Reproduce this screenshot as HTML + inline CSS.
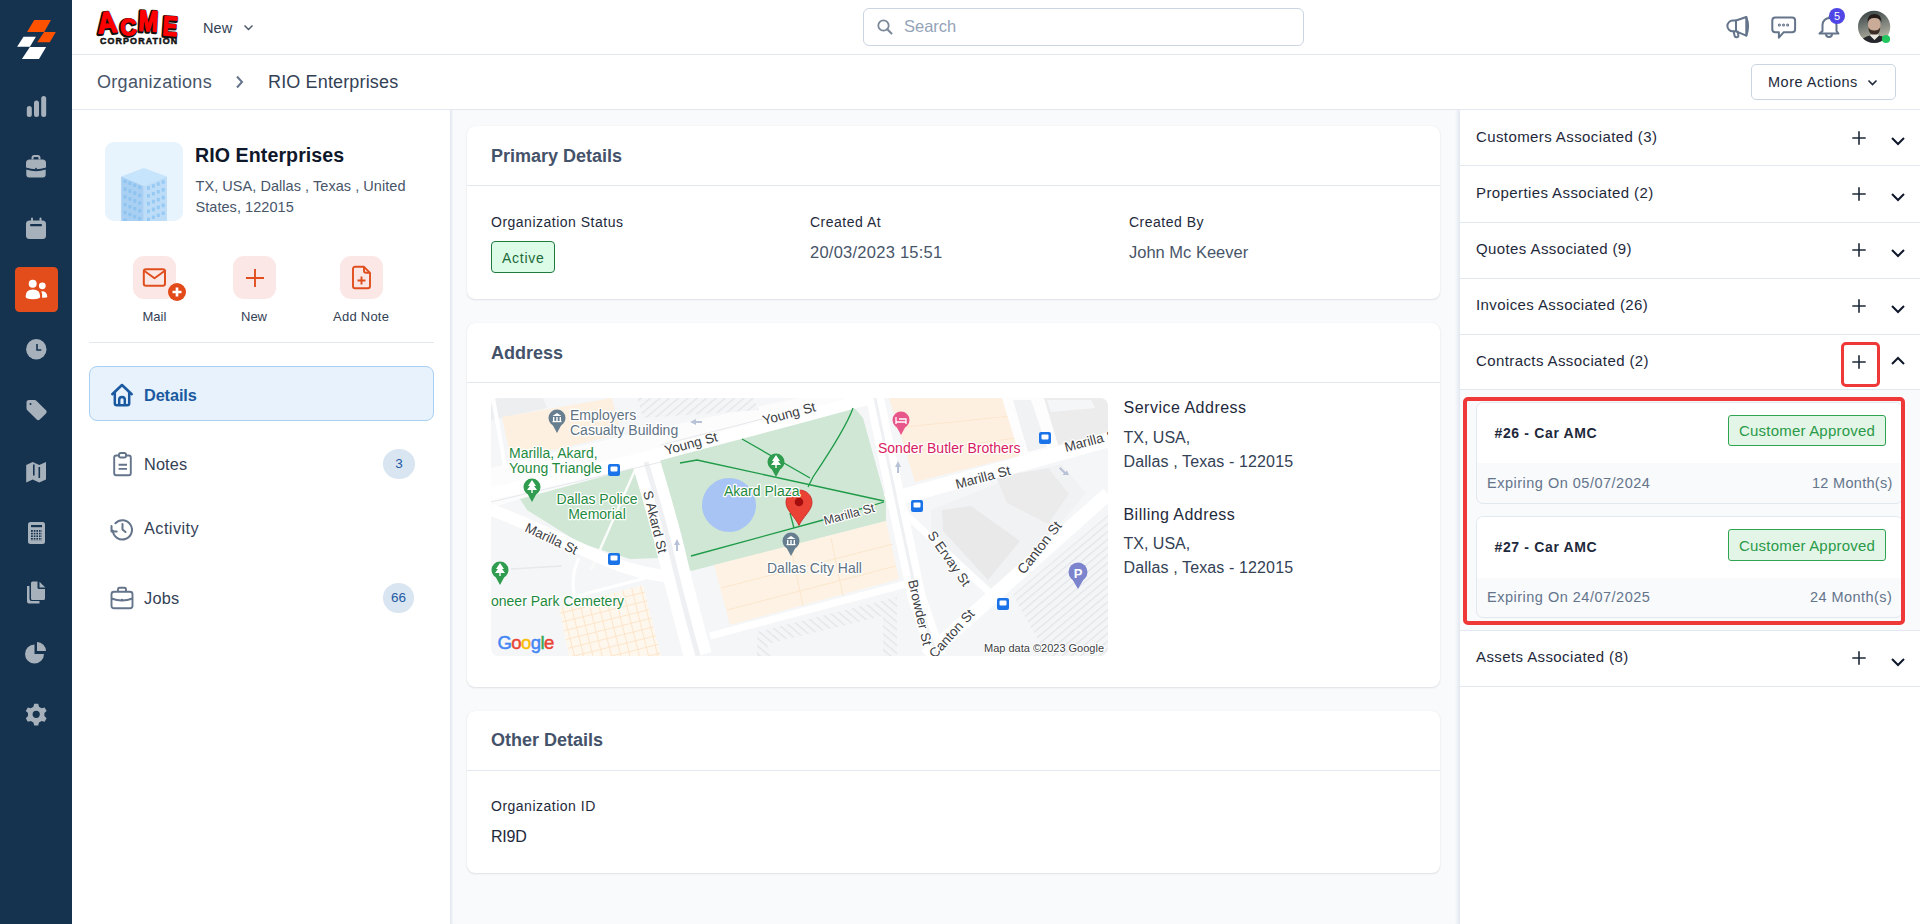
<!DOCTYPE html>
<html><head><meta charset="utf-8">
<style>
*{box-sizing:border-box;margin:0;padding:0}
html,body{width:1920px;height:924px;overflow:hidden;background:#fff;font-family:"Liberation Sans",sans-serif;color:#1e293b}
.abs{position:absolute}
.t{position:absolute;white-space:nowrap;line-height:1}
svg{position:absolute;overflow:visible}
#side{left:0;top:0;width:72px;height:924px;background:#15334f}
#top{left:72px;top:0;width:1848px;height:55px;background:#fff;border-bottom:1px solid #e2e8f0}
#crumb{left:72px;top:55px;width:1848px;height:55px;background:#fff;border-bottom:1px solid #e2e8f0}
#lp{left:72px;top:110px;width:379px;height:814px;background:#fff;border-right:1px solid #e2e8f0}
#mid{left:451px;top:110px;width:1009px;height:814px;background:#f8fafc;box-shadow:inset 2px 0 2px -1px rgba(148,163,184,.18)}
#rp{left:1460px;top:110px;width:460px;height:814px;background:#fff}
#rpb{left:1455px;top:110px;width:5px;height:814px;background:linear-gradient(to right,rgba(226,232,240,0),#edf1f6 50%,#e2e8f0)}
.card{position:absolute;background:#fff;border-radius:8px;box-shadow:0 1px 2px rgba(15,23,42,.10),0 0 1px rgba(15,23,42,.10)}
.hline{position:absolute;height:1px;background:#e2e8f0}
.lbl{font-size:14px;letter-spacing:.5px;color:#1e293b}
.val{font-size:16.5px;color:#475569;letter-spacing:.1px}
.h2{font-size:18px;font-weight:700;color:#44526a}
.row{position:absolute;left:1460px;width:460px;height:56px}
.row .rt{position:absolute;left:16px;top:19px;font-size:15px;letter-spacing:.4px;color:#1e293b;white-space:nowrap;line-height:1}
.mi{position:absolute;left:0;width:72px}
</style></head><body>
<div id="side" class="abs">
  <!-- logo -->
  <svg width="72" height="72" style="left:0;top:0">
    <polygon points="34.2,20.1 50.9,20.1 44.2,31.9 27.1,31.9" fill="#ff5200"/>
    <polygon points="44.2,32.1 55.8,32.1 49.8,42.2 37.2,42.2" fill="#ff5200"/>
    <polygon points="23.5,36.8 35.9,36.8 29.9,46.8 17.1,46.8" fill="#fff"/>
    <polygon points="29.9,46.9 46.1,46.9 39,59.1 21.9,59.1" fill="#fff"/>
  </svg>
  <!-- chart -->
  <svg width="72" height="30" style="left:0;top:92" fill="none" stroke="#a7b1bb" stroke-width="5" stroke-linecap="round">
    <line x1="29.3" y1="16.5" x2="29.3" y2="22.5"/><line x1="36.5" y1="11" x2="36.5" y2="22.5"/><line x1="43.7" y1="6.5" x2="43.7" y2="22.5"/>
  </svg>
  <!-- briefcase -->
  <svg width="72" height="30" style="left:0;top:152" fill="#a7b1bb">
    <path d="M31.5,7.5 v-1.5 a3,3 0 0 1 3,-3 h3 a3,3 0 0 1 3,3 v1.5 h-2 v-1.5 a1,1 0 0 0 -1,-1 h-3 a1,1 0 0 0 -1,1 v1.5z"/>
    <path d="M26,11 a3.5,3.5 0 0 1 3.5,-3.5 h13 a3.5,3.5 0 0 1 3.5,3.5 v4.5 q-10,3.5 -20,0z"/>
    <path d="M26.3,17.5 q9.7,3.3 19.4,0 v5 a3,3 0 0 1 -3,3 h-13.4 a3,3 0 0 1 -3,-3z"/>
    <circle cx="36" cy="16.6" r="0.9" fill="#15334f"/>
  </svg>
  <!-- calendar -->
  <svg width="72" height="30" style="left:0;top:213" fill="#a7b1bb">
    <rect x="31" y="4.5" width="2" height="4" rx="1"/><rect x="39.5" y="4.5" width="2" height="4" rx="1"/>
    <path d="M26,11 a3.5,3.5 0 0 1 3.5,-3.5 h13 a3.5,3.5 0 0 1 3.5,3.5 v11.5 a3.5,3.5 0 0 1 -3.5,3.5 h-13 a3.5,3.5 0 0 1 -3.5,-3.5z"/>
    <rect x="30" y="11" width="12" height="2.2" rx="1" fill="#15334f"/>
  </svg>
  <!-- active users -->
  <div class="abs" style="left:15px;top:267px;width:43px;height:45px;background:#e24d1b;border-radius:4.5px"></div>
  <svg width="72" height="30" style="left:0;top:274" fill="#fff">
    <circle cx="32.7" cy="9.7" r="4"/><circle cx="42.3" cy="11.8" r="3.4"/>
    <path d="M25.6,22.5 q0,-7 7.3,-7 q7.3,0 7.3,7 q0,2.8 -7.3,2.8 q-7.3,0 -7.3,-2.8z"/><path d="M41.3,17.3 q5.8,-0.3 6,5.7 q0,0.7 -5.2,0.8 q0.6,-3.6 -0.8,-6.5z"/>
  </svg>
  <!-- clock -->
  <svg width="72" height="30" style="left:0;top:334">
    <circle cx="36.3" cy="15.2" r="10.2" fill="#a7b1bb"/>
    <path d="M37,10 v6 h4.3" fill="none" stroke="#15334f" stroke-width="1.6"/>
  </svg>
  <!-- tag -->
  <svg width="72" height="30" style="left:0;top:395" fill="#a7b1bb">
    <path d="M26.5,7.5 a2.5,2.5 0 0 1 2.5,-2.5 h5.5 a3,3 0 0 1 2.1,0.9 l9.4,9.4 a2.2,2.2 0 0 1 0,3.1 l-6.2,6.2 a2.2,2.2 0 0 1 -3.1,0 l-9.4,-9.4 a3,3 0 0 1 -0.8,-2.1z"/>
    <circle cx="30.5" cy="9" r="1" fill="#15334f"/>
  </svg>
  <!-- map -->
  <svg width="72" height="30" style="left:0;top:456" fill="#a7b1bb">
    <path d="M26.2,9 l6.5,-3 l6.5,3 l6.8,-3 v17.5 l-6.8,3 l-6.5,-3 l-6.5,3z"/>
    <rect x="33" y="8.5" width="1.6" height="11" fill="#15334f"/><rect x="38.5" y="11" width="1.6" height="11" fill="#15334f"/>
  </svg>
  <!-- calculator -->
  <svg width="72" height="30" style="left:0;top:517" fill="#a7b1bb">
    <rect x="28" y="5" width="17" height="22" rx="2.5"/>
    <rect x="31" y="8" width="11" height="2.2" fill="#15334f"/>
    <g fill="#15334f"><rect x="31" y="13" width="11" height="10.5"/></g>
    <g fill="#a7b1bb"><rect x="32.8" y="13" width="1" height="10.5"/><rect x="35.4" y="13" width="1" height="10.5"/><rect x="38" y="13" width="1" height="10.5"/><rect x="40.6" y="13" width="1" height="10.5"/>
    <rect x="31" y="14.8" width="11" height="1"/><rect x="31" y="17.4" width="11" height="1"/><rect x="31" y="20" width="11" height="1"/><rect x="31" y="22.6" width="11" height="1"/></g>
  </svg>
  <!-- files -->
  <svg width="72" height="30" style="left:0;top:577" fill="#a7b1bb">
    <path d="M27,9 h2.5 v13 a2,2 0 0 0 2,2 h8 v2.5 h-10.5 a2,2 0 0 1 -2,-2z"/>
    <path d="M31,6 a1.5,1.5 0 0 1 1.5,-1.5 h5 v6 a1.5,1.5 0 0 0 1.5,1.5 h6 v9.5 a1.5,1.5 0 0 1 -1.5,1.5 h-11 a1.5,1.5 0 0 1 -1.5,-1.5z"/>
    <path d="M39.5,4.8 l5.8,5.8 h-5.8z"/>
  </svg>
  <!-- pie -->
  <svg width="72" height="30" style="left:0;top:638" fill="#a7b1bb">
    <path d="M34.5,6.5 a9.5,9.5 0 1 0 9.5,9.5 h-9.5z"/>
    <path d="M37,4 a9,9 0 0 1 9,9 h-9z"/>
  </svg>
  <!-- gear -->
  <svg width="72" height="30" style="left:0;top:699" viewBox="0 0 72 30">
    <g transform="translate(36.2,15.3)">
      <path fill="#a7b1bb" d="M-2,-10.5 h4 l0.8,3 l2.6,1.5 l3,-0.9 l2,3.5 l-2.2,2.2 v3 l2.2,2.2 l-2,3.5 l-3,-0.9 l-2.6,1.5 l-0.8,3 h-4 l-0.8,-3 l-2.6,-1.5 l-3,0.9 l-2,-3.5 l2.2,-2.2 v-3 l-2.2,-2.2 l2,-3.5 l3,0.9 l2.6,-1.5z"/>
      <circle r="3.6" fill="#15334f"/>
    </g>
  </svg>
</div>

<div id="top" class="abs"></div>
<div id="crumb" class="abs"></div>
<div id="lp" class="abs"></div>
<div id="mid" class="abs"></div>
<div id="rp" class="abs"></div><div id="rpb" class="abs"></div>

<!-- TOPBAR CONTENT -->
<!-- ACME logo -->
<svg width="90" height="44" style="left:95px;top:5px" font-family="Liberation Sans" font-weight="700">
  <g id="acme">
    <text transform="translate(3,28.5) rotate(-5) scale(1.12,1.22)" font-size="24.5">A</text>
    <text transform="translate(25.5,30.5) rotate(-3) scale(1.08,1.1)" font-size="21">C</text>
    <text transform="translate(43,25.5) rotate(3) scale(1.02,1.27)" font-size="23">M</text>
    <text transform="translate(67,30) rotate(4) scale(1.0,1.22)" font-size="22.5">E</text>
  </g>
  <use href="#acme" fill="#111" stroke="#111" stroke-width="3.2" stroke-linejoin="round" transform="translate(-0.6,0.8)"/>
  <use href="#acme" fill="#f00" stroke="#f00" stroke-width="1.1" stroke-linejoin="round"/>
  <text x="5" y="39.2" font-size="8.9" fill="#111" stroke="#111" stroke-width=".5" letter-spacing="1.12">CORPORATION</text>
</svg>
<div class="t" style="left:203px;top:21px;font-size:14.5px;letter-spacing:.1px;color:#334155">New</div>
<svg width="12" height="8" style="left:243px;top:24px"><path d="M1.5,1.5 l4,4 l4,-4" fill="none" stroke="#475569" stroke-width="1.4"/></svg>

<!-- search -->
<div class="abs" style="left:863px;top:8px;width:441px;height:38px;border:1px solid #cbd5e1;border-radius:6px;background:#fff"></div>
<svg width="20" height="20" style="left:875px;top:17px"><circle cx="8.5" cy="8.5" r="5.2" fill="none" stroke="#7b8898" stroke-width="1.8"/><path d="M12.3,12.3 l4.2,4.2" stroke="#7b8898" stroke-width="2" stroke-linecap="round"/></svg>
<div class="t" style="left:904px;top:18px;font-size:16.5px;color:#94a3b8">Search</div>

<!-- right icons -->
<svg width="30" height="30" style="left:1724px;top:12px" fill="none" stroke="#64748b" stroke-width="2" stroke-linejoin="round" stroke-linecap="round">
  <path d="M12,8.5 L22.3,5 L22.3,23.6 L12,19.3 Z"/>
  <path d="M12,8.5 H8.8 a5.4,5.4 0 0 0 0,10.8 H12"/>
  <path d="M22.3,5 q3.6,9.3 0,18.6"/>
  <path d="M9.6,19.6 l1,4.2 a1.9,1.9 0 0 0 3.7,-0.9 l-0.7,-3.3"/>
</svg>
<svg width="30" height="30" style="left:1768px;top:12px" fill="none" stroke="#64748b" stroke-width="2" stroke-linejoin="round">
  <path d="M7.3,5.6 h16.8 a3,3 0 0 1 3,3 v8.7 a3,3 0 0 1 -3,3 h-8.6 l-4.6,5.4 v-5.4 h-3.6 a3,3 0 0 1 -3,-3 v-8.7 a3,3 0 0 1 3,-3z"/>
  <circle cx="11.4" cy="13" r="0.55" stroke-width="1.9"/><circle cx="15.5" cy="13" r="0.55" stroke-width="1.9"/><circle cx="19.6" cy="13" r="0.55" stroke-width="1.9"/>
</svg>
<svg width="30" height="30" style="left:1814px;top:12px" fill="none" stroke="#64748b" stroke-width="2" stroke-linejoin="round">
  <path d="M5.5,21.5 h19 l-2,-2.5 v-6 a7,7 0 0 0 -14,0 v6z"/>
  <path d="M12,22 a3,3 0 0 0 6,0"/>
  <path d="M15,6 v-1.5"/>
</svg>
<div class="abs" style="left:1829px;top:7.5px;width:16px;height:16px;border-radius:50%;background:#4f46e5;color:#fff;font-size:11px;line-height:16px;text-align:center">5</div>
<!-- avatar -->
<svg width="34" height="34" style="left:1857px;top:10px">
  <defs><linearGradient id="av" x1="0" y1="0" x2="0.3" y2="1"><stop offset="0" stop-color="#2f3a3c"/><stop offset=".55" stop-color="#7b807a"/><stop offset="1" stop-color="#b9b5a4"/></linearGradient>
  <clipPath id="avc"><circle cx="17.1" cy="16.9" r="16.1"/></clipPath></defs>
  <circle cx="17.1" cy="16.9" r="16.1" fill="url(#av)"/>
  <g clip-path="url(#avc)">
    <ellipse cx="17.3" cy="15" rx="6.3" ry="8.5" fill="#c9ab97"/>
    <path d="M10.5,13 q-0.5,-9 7,-9 q7.5,0 7,9 q-1,-5 -7,-5 q-6,0 -7,5z" fill="#231c19"/>
    <path d="M11.3,17 q0.5,8 6,8.5 q5.5,-0.5 6,-8.5 q-1.5,3.5 -6,3.5 q-4.5,0 -6,-3.5z" fill="#3b2d26"/>
    <path d="M2,36 q2,-9 11,-10.5 l4.5,4 l4.5,-4 q9,1.5 11,10.5z" fill="#25272c"/>
    <path d="M13,25.5 l4.5,4.5 l4.5,-4.5 l-1,-1 h-7z" fill="#e9e6e0"/>
  </g>
  <circle cx="29" cy="29" r="4.1" fill="#22c55e"/>
</svg>

<!-- BREADCRUMB -->
<div class="t" style="left:97px;top:73px;font-size:18px;letter-spacing:.3px;color:#475569">Organizations</div>
<svg width="12" height="14" style="left:234px;top:75px"><path d="M3,1.5 l5,5.5 l-5,5.5" fill="none" stroke="#64748b" stroke-width="2"/></svg>
<div class="t" style="left:268px;top:73px;font-size:18px;letter-spacing:.15px;color:#334155">RIO Enterprises</div>
<div class="abs" style="left:1751px;top:64px;width:145px;height:36px;border:1px solid #cbd5e1;border-radius:5px"></div>
<div class="t" style="left:1768px;top:75px;font-size:14.5px;letter-spacing:.5px;color:#1e293b">More Actions</div>
<svg width="12" height="8" style="left:1866.5px;top:78.5px"><path d="M1.5,1.5 l4,4 l4,-4" fill="none" stroke="#1e293b" stroke-width="1.6"/></svg>


<!-- LEFT PANEL -->
<div class="abs" style="left:105px;top:142px;width:78px;height:79px;border-radius:9px;background:#e7f3fd;overflow:hidden">
  <svg width="78" height="79" style="left:0;top:0">
<polygon points="16.2,34.6 38.8,26.1 61.9,34.6 38.8,44" fill="#c6e4fb"/>
<polygon points="16.2,34.6 38.8,44 38.8,79 16.2,79" fill="#a9d0f3"/>
<polygon points="38.8,44 61.9,34.6 61.9,79 38.8,79" fill="#bcdcf7"/>
<g fill="#8fc4f1">
<rect x="18.5" y="37.5" width="3" height="3.6" rx=".6"/>
<rect x="18.5" y="45.3" width="3" height="3.6" rx=".6"/>
<rect x="18.5" y="53.1" width="3" height="3.6" rx=".6"/>
<rect x="18.5" y="60.9" width="3" height="3.6" rx=".6"/>
<rect x="18.5" y="68.7" width="3" height="3.6" rx=".6"/>
<rect x="18.5" y="76.5" width="3" height="3.6" rx=".6"/>
<rect x="23.4" y="39.5" width="3" height="3.6" rx=".6"/>
<rect x="23.4" y="47.3" width="3" height="3.6" rx=".6"/>
<rect x="23.4" y="55.1" width="3" height="3.6" rx=".6"/>
<rect x="23.4" y="62.9" width="3" height="3.6" rx=".6"/>
<rect x="23.4" y="70.7" width="3" height="3.6" rx=".6"/>
<rect x="28.3" y="41.5" width="3" height="3.6" rx=".6"/>
<rect x="28.3" y="49.3" width="3" height="3.6" rx=".6"/>
<rect x="28.3" y="57.1" width="3" height="3.6" rx=".6"/>
<rect x="28.3" y="64.9" width="3" height="3.6" rx=".6"/>
<rect x="28.3" y="72.7" width="3" height="3.6" rx=".6"/>
<rect x="33.2" y="43.6" width="3" height="3.6" rx=".6"/>
<rect x="33.2" y="51.4" width="3" height="3.6" rx=".6"/>
<rect x="33.2" y="59.2" width="3" height="3.6" rx=".6"/>
<rect x="33.2" y="67.0" width="3" height="3.6" rx=".6"/>
<rect x="33.2" y="74.8" width="3" height="3.6" rx=".6"/>
<rect x="42.0" y="44.2" width="3" height="3.6" rx=".6" fill="#96c9f3"/>
<rect x="42.0" y="52.0" width="3" height="3.6" rx=".6" fill="#96c9f3"/>
<rect x="42.0" y="59.8" width="3" height="3.6" rx=".6" fill="#96c9f3"/>
<rect x="42.0" y="67.6" width="3" height="3.6" rx=".6" fill="#96c9f3"/>
<rect x="42.0" y="75.4" width="3" height="3.6" rx=".6" fill="#96c9f3"/>
<rect x="46.9" y="42.2" width="3" height="3.6" rx=".6" fill="#96c9f3"/>
<rect x="46.9" y="50.0" width="3" height="3.6" rx=".6" fill="#96c9f3"/>
<rect x="46.9" y="57.8" width="3" height="3.6" rx=".6" fill="#96c9f3"/>
<rect x="46.9" y="65.6" width="3" height="3.6" rx=".6" fill="#96c9f3"/>
<rect x="46.9" y="73.4" width="3" height="3.6" rx=".6" fill="#96c9f3"/>
<rect x="51.8" y="40.2" width="3" height="3.6" rx=".6" fill="#96c9f3"/>
<rect x="51.8" y="48.0" width="3" height="3.6" rx=".6" fill="#96c9f3"/>
<rect x="51.8" y="55.8" width="3" height="3.6" rx=".6" fill="#96c9f3"/>
<rect x="51.8" y="63.6" width="3" height="3.6" rx=".6" fill="#96c9f3"/>
<rect x="51.8" y="71.4" width="3" height="3.6" rx=".6" fill="#96c9f3"/>
<rect x="56.7" y="38.2" width="3" height="3.6" rx=".6" fill="#96c9f3"/>
<rect x="56.7" y="46.0" width="3" height="3.6" rx=".6" fill="#96c9f3"/>
<rect x="56.7" y="53.8" width="3" height="3.6" rx=".6" fill="#96c9f3"/>
<rect x="56.7" y="61.6" width="3" height="3.6" rx=".6" fill="#96c9f3"/>
<rect x="56.7" y="69.4" width="3" height="3.6" rx=".6" fill="#96c9f3"/>
</g></svg>
</div>
<div class="t" style="left:195px;top:146.3px;font-size:19.6px;font-weight:700;letter-spacing:.08px;color:#0f172a">RIO Enterprises</div>
<div class="t" style="left:195.5px;top:179px;font-size:14.5px;color:#475569;letter-spacing:.05px">TX, USA, Dallas , Texas , United</div>
<div class="t" style="left:195.5px;top:200px;font-size:14.5px;color:#475569;letter-spacing:.05px">States, 122015</div>

<div class="abs" style="left:133px;top:256px;width:43px;height:43px;border-radius:11px;background:#fbe8e6"></div>
<div class="abs" style="left:233px;top:256px;width:43px;height:43px;border-radius:11px;background:#fbe8e6"></div>
<div class="abs" style="left:340px;top:256px;width:43px;height:43px;border-radius:11px;background:#fbe8e6"></div>
<svg width="24" height="20" style="left:142px;top:267px" fill="none" stroke="#e04e1d" stroke-width="2" stroke-linejoin="round">
  <rect x="1.8" y="2.2" width="21.2" height="16.5" rx="2.2"/><path d="M2.5,4 l10,7.2 l10,-7.2"/>
</svg>
<svg width="20" height="20" style="left:167px;top:282px"><circle cx="10" cy="10" r="9" fill="#e24a19"/><path d="M10,5.5 v9 M5.5,10 h9" stroke="#fff" stroke-width="2.6"/></svg>
<svg width="20" height="20" style="left:244.5px;top:267.5px"><path d="M10,1 v18 M1,10 h18" stroke="#e04e1d" stroke-width="1.9"/></svg>
<svg width="22" height="26" style="left:351px;top:265px" fill="none" stroke="#e04e1d" stroke-width="1.9" stroke-linejoin="round">
  <path d="M4,1.8 h9 l6,6 v13.5 a2,2 0 0 1 -2,2 h-13 a2,2 0 0 1 -2,-2 v-17.5 a2,2 0 0 1 2,-2z"/><path d="M13,1.8 v4 a2,2 0 0 0 2,2 h4"/><path d="M10.5,11.5 v8 M6.5,15.5 h8"/>
</svg>
<div class="t" style="left:142.5px;top:310px;font-size:13px;color:#334155">Mail</div>
<div class="t" style="left:241px;top:310px;font-size:13px;color:#334155">New</div>
<div class="t" style="left:333px;top:310px;font-size:13px;letter-spacing:.25px;color:#334155">Add Note</div>

<div class="hline" style="left:89px;top:342px;width:345px"></div>

<div class="abs" style="left:89px;top:366px;width:345px;height:55px;border:1px solid #a8d0f3;border-radius:8px;background:#e7f2fc"></div>
<svg width="26" height="26" style="left:109px;top:382px" fill="none" stroke="#1b5aa0" stroke-width="2.2" stroke-linejoin="round">
  <path d="M3.3,12.2 l9.7,-9.2 l9.7,9.2" stroke-width="2.6" stroke-linecap="round"/><path d="M5.8,10 v11.3 a2,2 0 0 0 2,2 h10.4 a2,2 0 0 0 2,-2 v-11.3" stroke-width="2.5"/><path d="M10.2,23.3 v-5.5 a2.8,2.8 0 0 1 5.6,0 v5.5" stroke-width="2.5"/>
</svg>
<div class="t" style="left:144px;top:386.8px;font-size:16.3px;font-weight:700;letter-spacing:-.1px;color:#1b5aa0">Details</div>

<svg width="26" height="26" style="left:110px;top:451px" fill="none" stroke="#64748b" stroke-width="1.9" stroke-linejoin="round">
  <rect x="4.2" y="4.5" width="16.6" height="19.8" rx="2"/><rect x="9" y="2" width="7" height="4.5" rx="1.8" fill="#fff"/><path d="M8.6,13.8 h8.4 M8.6,17.9 h8.4"/>
</svg>
<div class="t" style="left:144px;top:456.3px;font-size:16.3px;color:#334155;letter-spacing:.15px">Notes</div>
<div class="abs" style="left:383px;top:449px;width:32px;height:29.5px;border-radius:50%;background:#d9e5f1;color:#1f5aa3;font-size:13.5px;line-height:30px;text-align:center">3</div>

<svg width="26" height="26" style="left:109px;top:516px" fill="none" stroke="#64748b" stroke-width="2" stroke-linecap="round" stroke-linejoin="round">
  <path d="M3.8,14.5 a9.6,9.6 0 1 0 2.6,-7.2"/><path d="M2.5,10 v5.5 h5.2" transform="rotate(0)"/><path d="M13.5,8 v5.5 l3,2.5"/>
</svg>
<div class="t" style="left:144px;top:520px;font-size:16.3px;color:#334155;letter-spacing:.45px">Activity</div>

<svg width="26" height="26" style="left:109px;top:585px" fill="none" stroke="#64748b" stroke-width="1.9" stroke-linejoin="round">
  <rect x="2.5" y="6.8" width="21" height="16.5" rx="2.5"/><path d="M9,6.8 v-2.5 a1.5,1.5 0 0 1 1.5,-1.5 h5 a1.5,1.5 0 0 1 1.5,1.5 v2.5"/><path d="M2.5,13.5 q10.5,4 21,0"/><circle cx="13" cy="15" r=".5" stroke-width="1.4"/>
</svg>
<div class="t" style="left:144px;top:590.3px;font-size:16.3px;color:#334155;letter-spacing:.25px">Jobs</div>
<div class="abs" style="left:383px;top:583px;width:31px;height:29.5px;border-radius:50%;background:#d9e5f1;color:#1f5aa3;font-size:13.5px;line-height:30px;text-align:center">66</div>


<!-- MIDDLE CARDS -->
<div class="card" style="left:467px;top:125.5px;width:973px;height:173.5px"></div>
<div class="hline" style="left:467px;top:185px;width:973px"></div>
<div class="t h2" style="left:491px;top:147px">Primary Details</div>
<div class="t lbl" style="left:491px;top:214.5px">Organization Status</div>
<div class="abs" style="left:491px;top:241px;width:64px;height:31.5px;border:1.3px solid #1f7a40;border-radius:4px;background:#dcfce7"></div>
<div class="t" style="left:502px;top:251px;font-size:14px;letter-spacing:.75px;color:#1b6a37">Active</div>
<div class="t lbl" style="left:810px;top:214.5px">Created At</div>
<div class="t val" style="left:810px;top:244px;letter-spacing:.25px">20/03/2023 15:51</div>
<div class="t lbl" style="left:1129px;top:214.5px">Created By</div>
<div class="t val" style="left:1129px;top:244px;letter-spacing:0">John Mc Keever</div>

<div class="card" style="left:467px;top:322.5px;width:973px;height:364px"></div>
<div class="hline" style="left:467px;top:382px;width:973px"></div>
<div class="t h2" style="left:491px;top:344px">Address</div>
<div id="map" class="abs" style="left:491px;top:398px;width:617px;height:258px;border-radius:8px;overflow:hidden;background:#f5f6f8"><svg width="617" height="258" style="left:0;top:0" font-family="Liberation Sans">
<defs>
  <pattern id="hatch" width="6" height="6" patternUnits="userSpaceOnUse" patternTransform="rotate(-40)">
    <rect width="6" height="6" fill="#f4f5f7"/><rect width="6" height="1.2" fill="#e2e4e8"/>
  </pattern>
  <pattern id="hatch2" width="6" height="6" patternUnits="userSpaceOnUse" patternTransform="rotate(40)">
    <rect width="6" height="6" fill="#f4f5f7"/><rect width="6" height="1.2" fill="#e2e4e8"/>
  </pattern>
  <pattern id="ogrid" width="9" height="9" patternUnits="userSpaceOnUse" patternTransform="rotate(-14)">
    <rect width="9" height="9" fill="#fef7ee"/><rect width="9" height="0.8" fill="#fde2c2"/><rect width="0.8" height="9" fill="#fde2c2"/>
  </pattern>
</defs>
<rect width="617" height="258" fill="#f5f6f8"/>
<!-- top-left grey bits -->
<polygon points="0,0 52,0 56,10 10,20 0,22" fill="#eceef0"/>
<!-- white band Young St area -->
<polygon points="0,70 135,37 317,-2 385,-2 362,8 168,63 144,70 29,101 0,110" fill="#fcfcfd"/>
<line x1="2" y1="0" x2="14" y2="68" stroke="#fff" stroke-width="4"/>
<!-- Employers Casualty orange -->
<polygon points="11,19 121,0 130,36 20,62" fill="#fdf0e1"/>
<!-- top hatched -->
<polygon points="146,0 262,0 268,12 152,20" fill="url(#hatch)"/>
<!-- Police memorial park -->
<polygon points="29,101 143,70 169,160 139,161 89,145 36,112" fill="#cfe7d4"/>
<path d="M144,72 L100,172" stroke="#fafcfa" stroke-width="2.5"/>
<!-- Akard Plaza park -->
<polygon points="168,63 307,21 362,8 372,20 395,103 395,123 307,146 196,174" fill="#cfe7d4"/>
<!-- pond -->
<circle cx="238" cy="107" r="27" fill="#a7c4f5"/>
<!-- city hall orange -->
<polygon points="223,167 395,123 408,181 239,227" fill="#fdf2e4"/>
<g stroke="#fbe3c6" stroke-width=".8" fill="none"><path d="M230,190 L402,146 M236,212 L405,168 M300,150 L312,208 M340,140 L352,198"/></g>
<!-- bottom-left cemetery orange -->
<polygon points="68,210 152,187 170,258 78,258" fill="url(#ogrid)"/>
<!-- sonder orange -->
<polygon points="398,0 511,0 531,57 424,84" fill="#fdf0e1"/>
<g stroke="#fbe3c6" stroke-width=".8" fill="none"><path d="M404,30 L520,18 M410,55 L526,40"/></g>
<!-- grey buildings -->
<polygon points="440,112 505,86 570,66 595,95 540,160 500,190 440,135" fill="#f1f2f3"/>
<polygon points="451,112 480,108 529,143 497,182 452,133" fill="#e9e9ea"/>
<polygon points="505,79 557,70 578,96 557,126 516,105" fill="#ebebec"/>
<polygon points="511,0 553,0 568,47 529,59" fill="#fdfdfe"/><polygon points="522,2 540,2 556,49 537,54" fill="#f1f2f4"/><polygon points="553,0 617,0 617,35 567,47" fill="#ececed"/><polygon points="556,2 600,2 604,10 560,14" fill="#f5f6f7"/>
<!-- bottom hatch lots -->
<polygon points="522,197 617,117 617,258 556,258" fill="url(#hatch)"/>
<polygon points="266,234 406,199 406,258 266,258" fill="url(#hatch2)"/>
<polygon points="276,246 392,218 392,258 280,258" fill="#f5f6f8"/>
<!-- roads -->
<g stroke="#ffffff" fill="none" stroke-linecap="butt">
  <path d="M0,96 L170,56 L310,19 L380,0" stroke-width="12"/>
  <path d="M0,112 C40,126 84,150 130,168 C160,178 185,180 200,178" stroke-width="12"/>
  <path d="M395,103 L617,42" stroke-width="15"/>
  <path d="M155,64 Q175,130 183,166 Q195,215 207,258" stroke-width="28"/>
  <path d="M384,0 L410,125 L426,200 L446,258" stroke-width="18"/>
  <path d="M435,258 L617,96" stroke-width="14"/>
  <path d="M406,108 L502,198" stroke-width="7"/>
  
  <path d="M219,238 L415,186" stroke-width="7"/>
  <path d="M20,171 L71,168" stroke-width="1.5" stroke="#e6e8eb"/>
  <path d="M88,160 Q78,180 85,205" stroke-width="3"/>
  <path d="M86,198 L170,176" stroke-width="3"/>
</g>
<!-- lane medians -->
<g fill="none">
  <path d="M155,64 Q175,130 183,166 Q195,215 207,258" stroke="#eef0f3" stroke-width="5"/>
  <path d="M384,0 L410,125 L426,200 L446,258" stroke="#eef0f3" stroke-width="3"/>
</g>
<g stroke="#dfe2e6" stroke-width=".8" fill="none">
  <path d="M0,104 L170,64"/>
  <path d="M170,47 L310,11"/>
</g>
<!-- park paths -->
<g stroke="#1e9a48" stroke-width="1.3" fill="none">
  <path d="M189,65 L206,62 L393,103"/>
  <path d="M200,158 L332,122 L393,104"/>
  <path d="M362,10 Q355,30 322,79 L317,89"/>
  <path d="M251,41 L319,80"/>
  <path d="M299,115 L303,130"/>
</g>
<!-- one-way arrows -->
<g fill="#b8c2d6">
  <path d="M199,24 l6,-3 v2 h6 v2 h-6 v2z"/>
  <path d="M186,141 l-3,6 h2 v6 h2 v-6 h2z"/>
  <path d="M407,63 l-3,6 h2 v6 h2 v-6 h2z"/><path d="M578,77 l-6.5,0 l1.5,-1.5 l-5,-5 l1.5,-1.5 l5,5 l1.5,-1.5z"/>
</g>
<!-- pins -->
<g>
  <circle cx="66" cy="20" r="8.5" fill="#667e8f"/><path d="M60,24 l6,11 l6,-11z" fill="#667e8f"/>
  <path d="M61.5,18 l4.5,-3 l4.5,3z" fill="#fff"/><rect x="62" y="19" width="1.4" height="4" fill="#fff"/><rect x="65.3" y="19" width="1.4" height="4" fill="#fff"/><rect x="68.6" y="19" width="1.4" height="4" fill="#fff"/><rect x="61.5" y="23" width="9" height="1.2" fill="#fff"/>

  <circle cx="300" cy="143" r="8.5" fill="#667e8f"/><path d="M294,147 l6,11 l6,-11z" fill="#667e8f"/>
  <path d="M295.5,141 l4.5,-3 l4.5,3z" fill="#fff"/><rect x="296" y="142" width="1.4" height="4" fill="#fff"/><rect x="299.3" y="142" width="1.4" height="4" fill="#fff"/><rect x="302.6" y="142" width="1.4" height="4" fill="#fff"/><rect x="295.5" y="146" width="9" height="1.2" fill="#fff"/>

  <circle cx="285" cy="64" r="8.5" fill="#2f9c4f"/><path d="M279,68 l6,11 l6,-11z" fill="#2f9c4f"/><path d="M285,57 l-4,6 h2 l-3,4 h10 l-3,-4 h2z M284.3,67 h1.4 v3 h-1.4z" fill="#fff"/>
  <circle cx="41" cy="89" r="8.5" fill="#2f9c4f"/><path d="M35,93 l6,11 l6,-11z" fill="#2f9c4f"/><path d="M41,82 l-4,6 h2 l-3,4 h10 l-3,-4 h2z M40.3,92 h1.4 v3 h-1.4z" fill="#fff"/>
  <circle cx="9" cy="172" r="8.5" fill="#2f9c4f"/><path d="M3,176 l6,11 l6,-11z" fill="#2f9c4f"/><path d="M9,165 l-4,6 h2 l-3,4 h10 l-3,-4 h2z M8.3,175 h1.4 v3 h-1.4z" fill="#fff"/>

  <circle cx="410" cy="22" r="8.5" fill="#e8578a"/><path d="M404,26 l6,11 l6,-11z" fill="#e8578a"/><path d="M405,19 v7 M405,24 h10 v2 M408,21 h7 v3" stroke="#fff" stroke-width="1.3" fill="none"/>

  <circle cx="587" cy="174" r="9.5" fill="#7b84cc"/><path d="M580,179 l7,12 l7,-12z" fill="#7b84cc"/>
  <text x="587" y="179.5" font-size="13" font-weight="700" fill="#fff" text-anchor="middle">P</text>
</g>
<!-- bus stops -->
<g fill="#1a73e8">
  <rect x="117" y="66" width="12" height="12" rx="2"/><rect x="117" y="155" width="12" height="12" rx="2"/>
  <rect x="420" y="102" width="12" height="12" rx="2"/><rect x="548" y="34" width="12" height="12" rx="2"/>
  <rect x="506" y="200" width="12" height="12" rx="2"/>
</g>
<g fill="#fff">
  <rect x="119.5" y="68.5" width="7" height="5" rx="1"/><rect x="119.5" y="157.5" width="7" height="5" rx="1"/><rect x="422.5" y="104.5" width="7" height="5" rx="1"/><rect x="550.5" y="36.5" width="7" height="5" rx="1"/><rect x="508.5" y="202.5" width="7" height="5" rx="1"/>
</g>
<!-- red pin -->
<path d="M308,92 c-7.5,0 -13,5.5 -13,12.5 c0,8 9,14 13,23 c4,-9 13,-15 13,-23 c0,-7 -5.5,-12.5 -13,-12.5z" fill="#ea4335" stroke="#c5221f" stroke-width=".8"/>
<circle cx="308" cy="104" r="4.3" fill="#a50e0e"/>

<!-- labels -->
<g font-size="14" fill="#5f7383" stroke="#fff" stroke-width="2.5" paint-order="stroke" stroke-linejoin="round">
  <text x="79" y="22">Employers</text>
  <text x="79" y="37">Casualty Building</text>
  <text x="276" y="175">Dallas City Hall</text>
</g>
<g font-size="14" fill="#1e8a3e" stroke="#fff" stroke-width="2.5" paint-order="stroke" stroke-linejoin="round">
  <text x="18" y="60">Marilla, Akard,</text>
  <text x="18" y="75">Young Triangle</text>
  <text x="106" y="106" text-anchor="middle">Dallas Police</text>
  <text x="106" y="121" text-anchor="middle">Memorial</text>
  <text x="233" y="98">Akard Plaza</text>
  <text x="0" y="208">oneer Park Cemetery</text>
</g>
<g font-size="14" fill="#d81b60" stroke="#fff" stroke-width="2.5" paint-order="stroke" stroke-linejoin="round">
  <text x="387" y="55">Sonder Butler Brothers</text>
</g>
<g font-size="13.5" fill="#3c4043" stroke="#fff" stroke-width="2.5" paint-order="stroke" stroke-linejoin="round">
  <text transform="translate(175,57) rotate(-15)">Young St</text>
  <text transform="translate(273,27) rotate(-15)">Young St</text>
  <text transform="translate(152,94) rotate(76)">S Akard St</text>
  <text transform="translate(33,133) rotate(25)">Marilla St</text>
  <text transform="translate(334,127) rotate(-15)" font-size="12.5">Marilla St</text>
  <text transform="translate(466,91) rotate(-15)">Marilla St</text>
  <text transform="translate(575,54) rotate(-15)">Marilla S</text>
  <text transform="translate(436,137) rotate(55)">S Ervay St</text>
  <text transform="translate(533,177) rotate(-52)" font-size="14">Canton St</text>
  <text transform="translate(444,261) rotate(-48)">Canton St</text>
  <text transform="translate(417,183) rotate(77)">Browder St</text>
</g>
<g font-size="18.5" font-weight="400" stroke-width=".45" paint-order="stroke">
  <text x="6.5" y="250.5" letter-spacing="-.6"><tspan fill="#4285f4" stroke="#4285f4">G</tspan><tspan fill="#ea4335" stroke="#ea4335">o</tspan><tspan fill="#fbbc05" stroke="#fbbc05">o</tspan><tspan fill="#4285f4" stroke="#4285f4">g</tspan><tspan fill="#34a853" stroke="#34a853">l</tspan><tspan fill="#ea4335" stroke="#ea4335">e</tspan></text>
</g>
<text x="493" y="254" font-size="11" fill="#3c4043" stroke="#fff" stroke-width="2" paint-order="stroke">Map data ©2023 Google</text>
</svg></div>
<div class="t" style="left:1123.5px;top:399.7px;font-size:16px;letter-spacing:.5px;color:#1e293b">Service Address</div>
<div class="t" style="left:1123.5px;top:429.5px;font-size:16px;letter-spacing:0;color:#334155">TX, USA,</div>
<div class="t" style="left:1123.5px;top:454.2px;font-size:16px;letter-spacing:.12px;color:#334155">Dallas , Texas - 122015</div>
<div class="t" style="left:1123.5px;top:506.7px;font-size:16px;letter-spacing:.45px;color:#1e293b">Billing Address</div>
<div class="t" style="left:1123.5px;top:535.5px;font-size:16px;letter-spacing:0;color:#334155">TX, USA,</div>
<div class="t" style="left:1123.5px;top:559.5px;font-size:16px;letter-spacing:.12px;color:#334155">Dallas , Texas - 122015</div>

<div class="card" style="left:467px;top:711px;width:973px;height:162px"></div>
<div class="hline" style="left:467px;top:770px;width:973px"></div>
<div class="t h2" style="left:491px;top:731px">Other Details</div>
<div class="t lbl" style="left:491px;top:798.5px">Organization ID</div>
<div class="t val" style="left:491px;top:829.3px;font-size:16px;letter-spacing:-.2px;color:#1e293b">RI9D</div>

<!-- RIGHT PANEL -->
<div class="row" style="top:110px;height:56px"><div class="rt">Customers Associated (3)</div></div>
<div class="row" style="top:166px"><div class="rt">Properties Associated (2)</div></div>
<div class="row" style="top:222px"><div class="rt">Quotes Associated (9)</div></div>
<div class="row" style="top:278px"><div class="rt">Invoices Associated (26)</div></div>
<div class="row" style="top:334px;height:56px"><div class="rt">Contracts Associated (2)</div></div>
<div class="abs" style="left:1460px;top:390px;width:460px;height:240px;background:#f8fafc"></div>
<div class="row" style="top:630px;height:57px"><div class="rt" style="top:19px">Assets Associated (8)</div></div>
<div class="hline" style="left:1460px;top:165px;width:460px"></div><div class="hline" style="left:1460px;top:222px;width:460px"></div><div class="hline" style="left:1460px;top:278px;width:460px"></div><div class="hline" style="left:1460px;top:334px;width:460px"></div><div class="hline" style="left:1460px;top:389px;width:460px"></div><div class="hline" style="left:1460px;top:630px;width:460px"></div><div class="hline" style="left:1460px;top:686px;width:460px"></div>
<svg width="16" height="16" style="left:1851.2px;top:130px"><path d="M8,1.3 v13.4 M1.3,8 h13.4" stroke="#1e293b" stroke-width="1.6"/></svg>
<svg width="16" height="16" style="left:1851.2px;top:186.2px"><path d="M8,1.3 v13.4 M1.3,8 h13.4" stroke="#1e293b" stroke-width="1.6"/></svg>
<svg width="16" height="16" style="left:1851.2px;top:242.2px"><path d="M8,1.3 v13.4 M1.3,8 h13.4" stroke="#1e293b" stroke-width="1.6"/></svg>
<svg width="16" height="16" style="left:1851.2px;top:298.2px"><path d="M8,1.3 v13.4 M1.3,8 h13.4" stroke="#1e293b" stroke-width="1.6"/></svg>
<svg width="16" height="16" style="left:1851.2px;top:353.8px"><path d="M8,1.3 v13.4 M1.3,8 h13.4" stroke="#1e293b" stroke-width="1.6"/></svg>
<svg width="16" height="16" style="left:1851.2px;top:650px"><path d="M8,1.3 v13.4 M1.3,8 h13.4" stroke="#1e293b" stroke-width="1.6"/></svg>
<svg width="16" height="10" style="left:1889.5px;top:136px"><path d="M2,2 l6,6 l6,-6" fill="none" stroke="#0f172a" stroke-width="2"/></svg>
<svg width="16" height="10" style="left:1889.5px;top:192px"><path d="M2,2 l6,6 l6,-6" fill="none" stroke="#0f172a" stroke-width="2"/></svg>
<svg width="16" height="10" style="left:1889.5px;top:248px"><path d="M2,2 l6,6 l6,-6" fill="none" stroke="#0f172a" stroke-width="2"/></svg>
<svg width="16" height="10" style="left:1889.5px;top:304px"><path d="M2,2 l6,6 l6,-6" fill="none" stroke="#0f172a" stroke-width="2"/></svg>
<svg width="16" height="10" style="left:1889.5px;top:657px"><path d="M2,2 l6,6 l6,-6" fill="none" stroke="#0f172a" stroke-width="2"/></svg>
<svg width="16" height="10" style="left:1890px;top:355.5px"><path d="M2,8 l6,-6 l6,6" fill="none" stroke="#0f172a" stroke-width="2"/></svg>

<!-- contract cards -->
<div class="abs" style="left:1476px;top:402px;width:427px;height:101.5px;border:1px solid #e2e8f0;border-radius:7px;background:#f8fafc;overflow:hidden"><div style="height:60px;background:#fff"></div></div>
<div class="t" style="left:1494.5px;top:426px;font-size:14px;font-weight:700;letter-spacing:.65px;color:#1e293b">#26 - Car AMC</div>
<div class="abs" style="left:1728px;top:415px;width:158px;height:31px;border:1.3px solid #2fa450;border-radius:3px;background:#e3f5e7"></div>
<div class="t" style="left:1739px;top:423.3px;font-size:15px;letter-spacing:.2px;color:#2a9a48">Customer Approved</div>
<div class="t" style="left:1487px;top:475.5px;font-size:14.5px;letter-spacing:.5px;color:#64748b">Expiring On 05/07/2024</div>
<div class="t" style="left:1812px;top:475.5px;font-size:14.5px;letter-spacing:.3px;color:#64748b">12 Month(s)</div>

<div class="abs" style="left:1476px;top:516px;width:427px;height:101.5px;border:1px solid #e2e8f0;border-radius:7px;background:#f8fafc;overflow:hidden"><div style="height:61px;background:#fff"></div></div>
<div class="t" style="left:1494.5px;top:539.5px;font-size:14px;font-weight:700;letter-spacing:.65px;color:#1e293b">#27 - Car AMC</div>
<div class="abs" style="left:1728px;top:529px;width:158px;height:32px;border:1.3px solid #2fa450;border-radius:3px;background:#e3f5e7"></div>
<div class="t" style="left:1739px;top:537.8px;font-size:15px;letter-spacing:.2px;color:#2a9a48">Customer Approved</div>
<div class="t" style="left:1487px;top:589.5px;font-size:14.5px;letter-spacing:.5px;color:#64748b">Expiring On 24/07/2025</div>
<div class="t" style="left:1810px;top:589.5px;font-size:14.5px;letter-spacing:.45px;color:#64748b">24 Month(s)</div>

<!-- red highlights -->
<div class="abs" style="left:1463px;top:397px;width:441.5px;height:227.5px;border:4px solid #ef3838;border-radius:5px"></div>
<div class="abs" style="left:1841.2px;top:342px;width:38.5px;height:44.5px;border:3.6px solid #ef3838;border-radius:5px"></div>

</body></html>
